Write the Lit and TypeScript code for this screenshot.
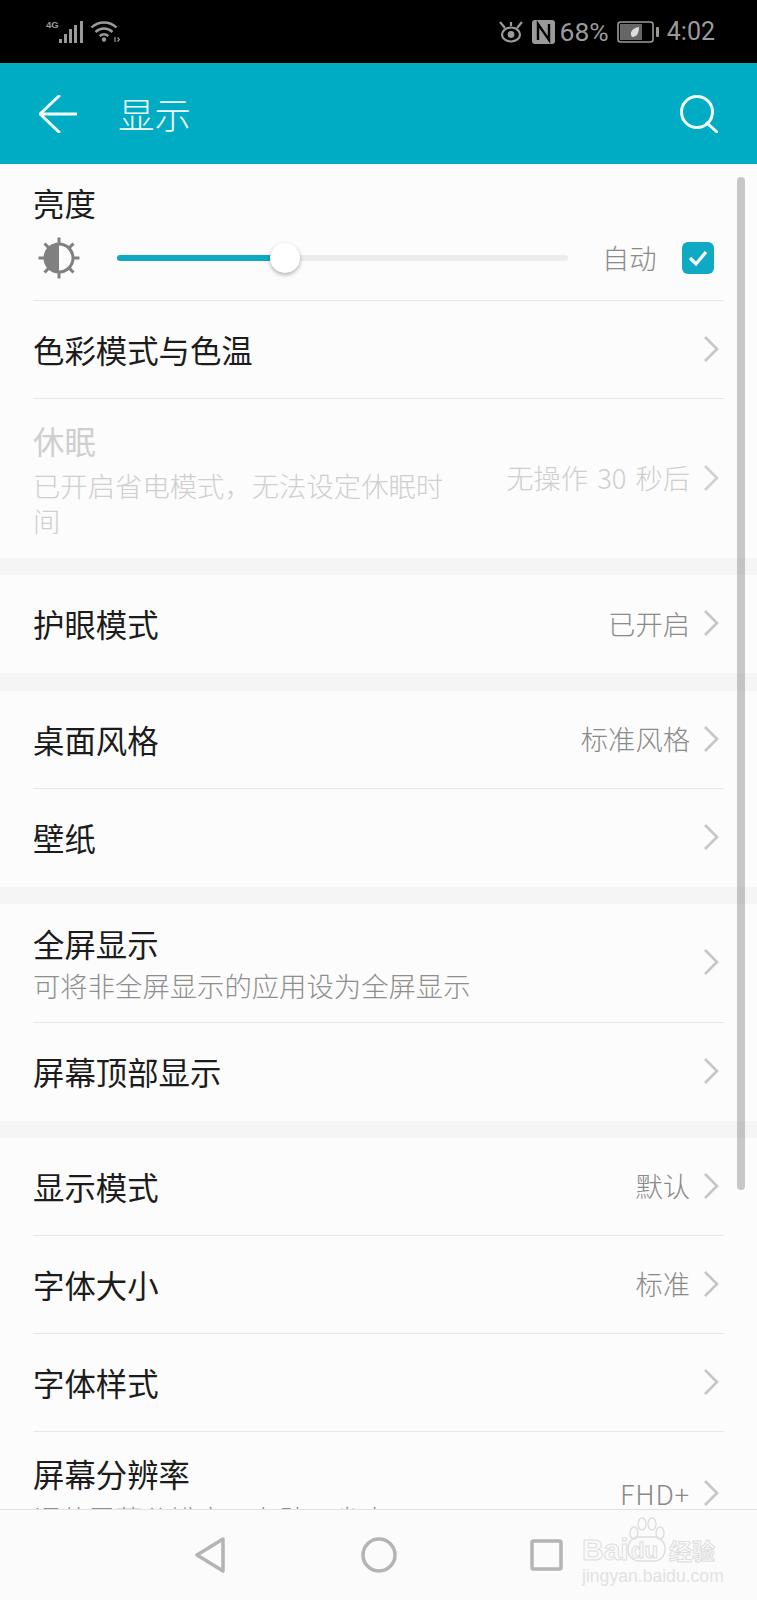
import { LitElement, html, css, svg } from "lit";
import { customElement } from "lit/decorators.js";

type Row = { t: string; sub?: string; v?: string; h: number; off?: boolean; end?: boolean; clip?: boolean };

const groups: Row[][] = [
  [
    { t: "色彩模式与色温", h: 98 },
    { t: "休眠", sub: "已开启省电模式，无法设定休眠时间", v: "无操作 30 秒后", h: 159, off: true, end: true },
  ],
  [{ t: "护眼模式", v: "已开启", h: 98, end: true }],
  [
    { t: "桌面风格", v: "标准风格", h: 98 },
    { t: "壁纸", h: 98, end: true },
  ],
  [
    { t: "全屏显示", sub: "可将非全屏显示的应用设为全屏显示", h: 119 },
    { t: "屏幕顶部显示", h: 98, end: true },
  ],
  [
    { t: "显示模式", v: "默认", h: 98 },
    { t: "字体大小", v: "标准", h: 98 },
    { t: "字体样式", h: 98 },
    { t: "屏幕分辨率", sub: "调节屏幕分辨率，有助于省电", v: "FHD+", h: 118, end: true, clip: true },
  ],
];

const chevron = html`<svg class="chev" viewBox="0 0 16 28"><path d="M2 2 14 14 2 26" /></svg>`;

@customElement("app-root")
export class AppRoot extends LitElement {
  static styles = css`
    :host {
      display: block;
      width: 757px;
      height: 1600px;
      position: relative;
      overflow: hidden;
      background: #fcfcfc;
      font-family: "Noto Sans CJK SC", "Noto Sans", sans-serif;
      color: #1c1c1c;
    }
    .page { display: flex; flex-direction: column; height: 1600px; }
    .status {
      height: 63px;
      flex: none;
      background: #000;
      color: #9a9a9a;
      display: flex;
      align-items: center;
      padding: 0 42px 0 46px;
      box-sizing: border-box;
    }
    .status svg { display: block; flex: none; }
    .s-left { display: flex; align-items: center; gap: 6px; }
    .sig { display: flex; align-items: flex-start; }
    .g4 { font: 700 9.5px/9px "Liberation Sans", sans-serif; width: 13px; }
    .s-right { margin-left: auto; display: flex; align-items: center; gap: 8px; }
    .pct, .clock { font: 400 25px/30px Roboto, sans-serif; color: #9a9a9a; }
    .pct { margin-left: -3px; font-size: 26.5px; }
    .bar {
      height: 101px;
      flex: none;
      background: #00acc4;
      color: #f2fdff;
      display: flex;
      align-items: center;
      padding: 0 39px;
      box-sizing: border-box;
    }
    .bar h1 { margin: 0 0 0 41px; font-size: 36.5px; font-weight: 300; line-height: 48px; }
    .bar .search { margin-left: auto; }
    .bar svg { display: block; flex: none; fill: none; stroke: #f2fdff; stroke-width: 3; stroke-linecap: round; stroke-linejoin: round; }
    .list { flex: 1; min-height: 0; overflow: hidden; }
    .bright {
      height: 137px;
      box-sizing: border-box;
      margin: 0 33px;
      border-bottom: 1px solid #e6e6e6;
      padding-top: 18px;
    }
    .bright .label { font-size: 31.4px; line-height: 42px; }
    .ctl { display: flex; align-items: center; height: 42px; margin-top: 13px; }
    .sun { margin-left: 5px; flex: none; display: block; }
    .track {
      margin-left: 37px;
      width: 451px;
      height: 6px;
      border-radius: 3px;
      background: #ececec;
      position: relative;
      flex: none;
    }
    .fill { height: 6px; border-radius: 3px; background: #0fa9c4; }
    .thumb {
      position: absolute;
      top: -12px;
      width: 30px;
      height: 30px;
      border-radius: 50%;
      background: #fff;
      box-shadow: 0 2px 4px rgba(0, 0, 0, 0.3);
    }
    .auto { margin: 0 0 3px 34px; font-size: 27.3px; line-height: 36px; color: #8a8a8a; width: 55px; flex: none; font-weight: 300; }
    .check {
      margin-left: 25px;
      width: 32px;
      height: 32px;
      border-radius: 6px;
      background: #0fa9c4;
      display: flex;
      align-items: center;
      justify-content: center;
      flex: none;
    }
    .gap { height: 17px; background: #f5f5f5; }
    .gap.wide { height: 18px; }
    .row {
      margin: 0 33px;
      box-sizing: border-box;
      display: flex;
      align-items: center;
      border-bottom: 1px solid #e6e6e6;
    }
    .row.end { border-bottom: 0; }
    .row.clip { align-items: flex-start; padding-top: 21px; }
    .main { flex: 1; min-width: 0; }
    .t { font-size: 31.4px; line-height: 42px; }
    .sub { font-size: 27.35px; line-height: 35px; margin-top: 3px; color: #8e8e8e; font-weight: 300; white-space: nowrap; }
    .off .sub { white-space: normal; max-width: 420px; margin-top: 6px; }
    .clip .sub { margin-top: 6px; }
    .off .t, .off .sub, .off .v { color: #cfcfcf; }
    .v { font-size: 27.3px; line-height: 36px; color: #8a8a8a; flex: none; margin: 0 0 3px 14px; white-space: nowrap; font-weight: 300; word-spacing: 3px; }
    .clip .v { margin-top: 22px; letter-spacing: 0.8px; }
    .clip .chev { margin-top: 26px; }
    .chev { width: 16px; height: 28px; margin: 0 5px 2px 13px; flex: none; display: block; fill: none; stroke: #c6c6c6; stroke-width: 2.6; }
    .off .chev { stroke: #d0d0d0; }
    .nav {
      height: 91px;
      flex: none;
      background: #fbfbfb;
      border-top: 1px solid #e2e2e2;
      box-sizing: border-box;
      display: flex;
      align-items: flex-start;
      position: relative;
      z-index: 1;
    }
    .nav svg { display: block; flex: none; fill: none; stroke: #b4b4b4; stroke-width: 3.5; stroke-linejoin: round; }
    .nav .n1 { margin: 27px 0 0 195px; }
    .nav .n2 { margin: 27px 0 0 135px; }
    .nav .n3 { margin: 29px 0 0 133px; }
    .scroll {
      position: absolute;
      left: 737px;
      top: 177px;
      width: 8px;
      height: 1013px;
      border-radius: 4px;
      background: rgba(120, 120, 120, 0.4);
    }
    .mark {
      position: absolute;
      left: 581px;
      top: 1517px;
      width: 140px;
      height: 70px;
      z-index: 2;
      color: #fafafa;
      font-family: "Liberation Sans", sans-serif;
    }
    .mark .paw { position: absolute; left: 46px; top: 0; }
    .mark .b, .mark .du, .mark .c { position: absolute; font-weight: 700; -webkit-text-stroke: 1px #dedede; white-space: nowrap; }
    .mark .b { left: 1px; top: 18px; font-size: 30px; line-height: 30px; }
    .mark .du { left: 50px; top: 22px; font-size: 22px; line-height: 24px; }
    .mark .c { left: 88px; top: 19px; font-family: "Noto Sans CJK SC", sans-serif; font-size: 23px; line-height: 28px; }
    .mark .d { position: absolute; left: 1px; top: 50px; font-size: 17.6px; line-height: 18px; color: #e2e2e2; white-space: nowrap; }
  `;

  private statusBar() {
    return html`<div class="status">
      <div class="s-left">
        <div class="sig">
          <span class="g4">4G</span>
          <svg width="25" height="24" viewBox="0 0 25 24" fill="#9a9a9a">
            <rect x="0" y="19" width="3" height="4" /><rect x="5" y="14" width="3" height="9" />
            <rect x="10" y="9" width="3" height="14" /><rect x="15" y="5" width="3" height="18" />
            <rect x="21" y="1" width="3" height="22" />
          </svg>
        </div>
        <svg width="30" height="24" viewBox="0 0 30 24" fill="none" stroke="#9a9a9a" stroke-width="2.4">
          <path d="M1.5 7.5C8.5 .8 19.5 .8 26.5 7.5" />
          <path d="M5.5 12C10.5 7.4 17.5 7.4 22.5 12" />
          <path d="M9.5 16C12.5 13.6 15.5 13.6 18.5 16" />
          <circle cx="14" cy="19.5" r="2.2" fill="#9a9a9a" stroke="none" />
          <path d="M25 17v5M27.5 17.5l2 2-2 2" stroke-width="1.2" />
        </svg>
      </div>
      <div class="s-right">
        <svg width="26" height="22" viewBox="0 0 26 22" fill="none" stroke="#9a9a9a" stroke-width="2.2">
          <ellipse cx="13" cy="13.5" rx="9" ry="7" />
          <circle cx="13" cy="13.5" r="3.4" fill="#9a9a9a" stroke="none" />
          <path d="M2 1l5 6M24 1l-5 6M13 1v4" />
        </svg>
        <svg width="23" height="24" viewBox="0 0 23 24">
          <rect width="23" height="24" rx="3" fill="#9a9a9a" />
          <path d="M6 20V4l11 16V4" fill="none" stroke="#000" stroke-width="2.4" />
        </svg>
        <span class="pct">68%</span>
        <svg width="42" height="22" viewBox="0 0 42 22">
          <rect x="1" y="1" width="35" height="20" rx="2.5" fill="none" stroke="#9a9a9a" stroke-width="1.6" />
          <rect x="3" y="3" width="22" height="16" fill="#666" />
          <path d="M15 16c-3-4 0-9 7-10 0 6-2 10-7 10z" fill="#ddd" />
          <rect x="39" y="6" width="3" height="10" rx="1" fill="#9a9a9a" />
        </svg>
        <span class="clock">4:02</span>
      </div>
    </div>`;
  }

  private renderRow(r: Row) {
    const cls = `row${r.off ? " off" : ""}${r.end ? " end" : ""}${r.clip ? " clip" : ""}`;
    return html`<div class=${cls} style="height:${r.h}px">
      <div class="main">
        <div class="t">${r.t}</div>
        ${r.sub ? html`<div class="sub">${r.sub}</div>` : null}
      </div>
      ${r.v ? html`<div class="v">${r.v}</div>` : null}
      ${chevron}
    </div>`;
  }

  render() {
    const rays = [0, 45, 90, 135, 180, 225, 270, 315].map(
      (a) => svg`<path d="M21 7V0.5" transform="rotate(${a} 21 21)" />`
    );
    return html`<div class="page">
        ${this.statusBar()}
        <div class="bar">
          <svg width="38" height="38" viewBox="0 0 38 38"><path d="M20 1 1 19 20 37M1 19H37" /></svg>
          <h1>显示</h1>
          <svg class="search" width="38" height="38" viewBox="0 0 38 38">
            <circle cx="17" cy="17" r="15.5" /><path d="M27 28 37 37" />
          </svg>
        </div>
        <div class="list">
          <div class="bright">
            <div class="label">亮度</div>
            <div class="ctl">
              <svg class="sun" width="42" height="42" viewBox="0 0 42 42" fill="none" stroke="#808080" stroke-width="3">
                ${rays}
                <circle cx="21" cy="21" r="14" fill="#fcfcfc" />
                <path d="M21 7a14 14 0 0 0 0 28z" fill="#808080" stroke="none" />
              </svg>
              <div class="track">
                <div class="fill" style="width:168px"></div>
                <div class="thumb" style="left:153px"></div>
              </div>
              <div class="auto">自动</div>
              <div class="check">
                <svg width="22" height="18" viewBox="0 0 22 18" fill="none" stroke="#fff" stroke-width="3.2"><path d="M3 9l6 6L19 3" /></svg>
              </div>
            </div>
          </div>
          ${groups.map(
            (g, i) =>
              html`${i > 0 ? html`<div class="gap ${i === 2 ? "wide" : ""}"></div>` : null}${g.map((r) =>
                this.renderRow(r)
              )}`
          )}
        </div>
        <div class="nav">
          <svg class="n1" width="31" height="36" viewBox="0 0 31 36"><path d="M28 2 2 18 28 34Z" /></svg>
          <svg class="n2" width="36" height="36" viewBox="0 0 36 36"><circle cx="18" cy="18" r="16" /></svg>
          <svg class="n3" width="33" height="32" viewBox="0 0 33 32"><rect x="2" y="2" width="29" height="28" rx="1.5" /></svg>
        </div>
      </div>
      <div class="scroll"></div>
      <div class="mark">
        <svg class="paw" width="42" height="46" viewBox="0 0 42 46" fill="none" stroke="#dedede" stroke-width="1.4">
          <ellipse cx="7" cy="16" rx="4" ry="6" /><ellipse cx="15" cy="7" rx="4" ry="6" />
          <ellipse cx="25" cy="7" rx="4" ry="6" /><ellipse cx="33" cy="16" rx="4" ry="6" />
          <rect x="1" y="20" width="37" height="24" rx="11" />
        </svg>
        <div class="b">Bai</div>
        <div class="du">du</div>
        <div class="c">经验</div>
        <div class="d">jingyan.baidu.com</div>
      </div>`;
  }
}
